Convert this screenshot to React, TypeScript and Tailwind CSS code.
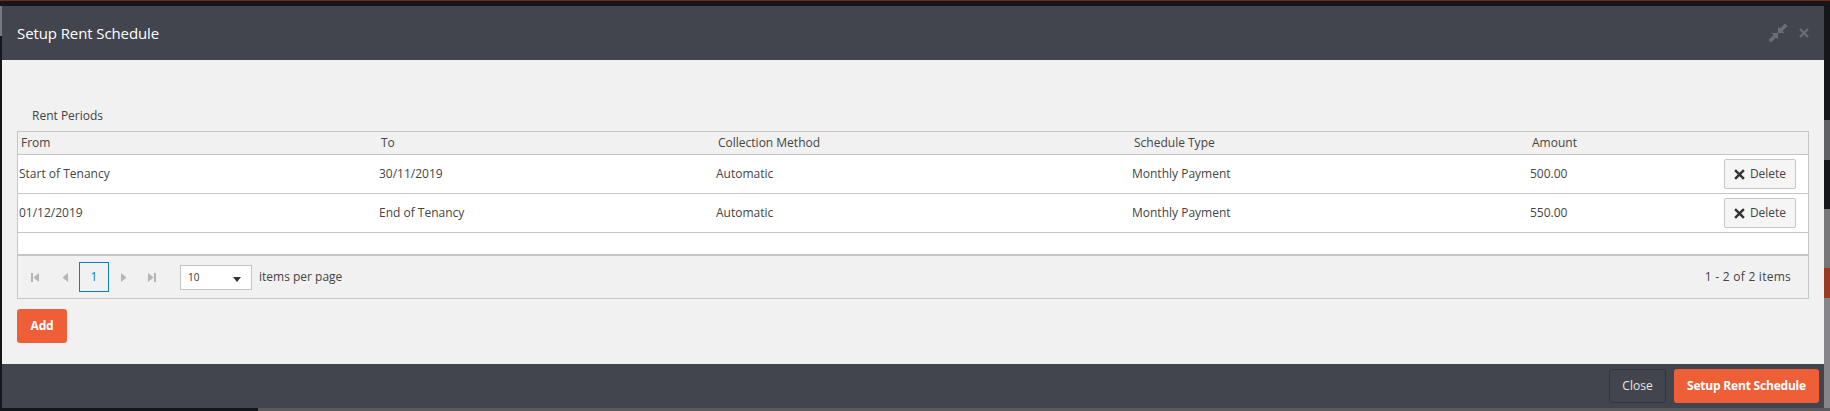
import React from 'react';

const rows = [
  { from: 'Start of Tenancy', to: '30/11/2019', amount: '500.00' },
  { from: '01/12/2019', to: 'End of Tenancy', amount: '550.00' },
];

// column widths of the grid, read off the reference
const cols = 'grid grid-cols-[360px_337px_416px_398px_193px_86px]';

const CompressIcon: React.FC = () => (
  <svg width="20" height="20" viewBox="0 0 20 20" fill="#6b6e76">
    <path d="M19.5 3 L14.5 8 L16.5 10 L10 10 L10 3.5 L12 5.5 L17 .5 Z" />
    <path d="M.5 17 L5.5 12 L3.5 10 L10 10 L10 16.5 L8 14.5 L3 19.5 Z" />
  </svg>
);

const CrossIcon: React.FC<{ size: number; className: string }> = ({ size, className }) => (
  <svg width={size} height={size} viewBox="0 0 10 10" fill="none" stroke="currentColor" strokeWidth="2.2" className={className}>
    <path d="M1 1 L9 9 M9 1 L1 9" />
  </svg>
);

const PagerArrow: React.FC<{ dir: 'left' | 'right'; bar?: boolean }> = ({ dir, bar }) => (
  <svg width="8" height="9" viewBox="0 0 8 9" fill="#b4b4b4">
    {dir === 'left' ? (
      <>
        {bar && <rect x="0" y="0" width="2" height="9" />}
        <path d="M8 0 V9 L2.5 4.5 Z" />
      </>
    ) : (
      <>
        <path d="M0 0 V9 L5.5 4.5 Z" />
        {bar && <rect x="6" y="0" width="2" height="9" />}
      </>
    )}
  </svg>
);

const DeleteButton: React.FC = () => (
  <button className="w-[72px] h-[30px] flex items-center justify-center gap-[5px] bg-[#f5f5f5] border border-[#c5c5c5] rounded-[2px] text-[12px] text-[#444]">
    <CrossIcon size={11} className="text-[#333]" />
    Delete
  </button>
);

export default function App() {
  return (
    <div className="h-[411px] w-[1830px] overflow-hidden flex flex-col bg-[#15161a] font-['Open_Sans',sans-serif] text-[12px] text-[#444]">
      <div className="h-px bg-[#7a2417]" />
      <div className="h-[5px]" />
      <div className="h-[402px] flex">
        <div className="w-[2px] flex flex-col">
          <div className="h-[30px] bg-[#77797d]" />
        </div>

        <div className="flex-1 flex flex-col">
          <div className="h-[54px] bg-[#42454e] flex items-center justify-between pl-[15px] pr-[15px]">
            <h1 className="text-[15px] tracking-[-0.1px] text-white">Setup Rent Schedule</h1>
            <div className="flex items-center gap-[11px]">
              <CompressIcon />
              <CrossIcon size={10} className="text-[#6b6e76]" />
            </div>
          </div>

          <div className="h-[304px] bg-[#f1f1f1] pl-[15px] pr-[15px]">
            <div className="h-[71px] pl-[15px] pt-[47px] leading-[18px]">Rent Periods</div>

            <div className="border border-[#c5c5c5] w-[1792px]">
              <div className={`${cols} h-[23px] items-center border-b border-[#c5c5c5]`}>
                <span className="pl-[3px]">From</span>
                <span className="pl-[3px]">To</span>
                <span className="pl-[3px]">Collection Method</span>
                <span className="pl-[3px]">Schedule Type</span>
                <span className="pl-[3px]">Amount</span>
              </div>

              {rows.map(r => (
                <div key={r.from} className={`${cols} h-[39px] items-center bg-white border-b border-[#c5c5c5]`}>
                  <span className="pl-px">{r.from}</span>
                  <span className="pl-px">{r.to}</span>
                  <span className="pl-px">Automatic</span>
                  <span className="pl-px">Monthly Payment</span>
                  <span className="pl-px">{r.amount}</span>
                  <span className="flex justify-end pr-[12px]">
                    <DeleteButton />
                  </span>
                </div>
              ))}

              <div className="h-[23px] bg-white border-b-2 border-[#c5c5c5]" />

              <div className="h-[42px] flex items-center justify-between pr-[17px]">
                <div className="flex items-center">
                  <div className="w-[61px] flex items-center justify-between pl-[13px] pr-[11px]">
                    <PagerArrow dir="left" bar />
                    <PagerArrow dir="left" />
                  </div>
                  <span className="w-[30px] h-[30px] flex items-center justify-center border border-[#0a7ebf] text-[#0a7ebf]">1</span>
                  <div className="w-[71px] flex items-center justify-between pl-[12px] pr-[24px]">
                    <PagerArrow dir="right" />
                    <PagerArrow dir="right" bar />
                  </div>
                  <div className="w-[72px] h-[25px] flex items-center justify-between bg-white border border-[#c5c5c5] pl-[7px] pr-[10px] text-[10px] text-[#333]">
                    10
                    <span className="mt-[5px] border-x-[4px] border-t-[5px] border-x-transparent border-t-[#333]" />
                  </div>
                  <span className="ml-[7px]">items per page</span>
                </div>
                <span className="tracking-[0.25px]">1 - 2 of 2 items</span>
              </div>
            </div>

            <button className="mt-[10px] w-[50px] h-[34px] rounded-[3px] bg-[#ee5f37] text-white font-bold tracking-[-0.2px]">Add</button>
          </div>

          <div className="h-[44px] bg-[#42454e] flex items-center justify-end gap-[8px] pr-[5px]">
            <button className="w-[57px] h-[34px] rounded-[3px] border border-[#33363d] text-[#e8e8e8]">Close</button>
            <button className="w-[145px] h-[34px] rounded-[3px] bg-[#ee5f37] text-white font-bold tracking-[-0.2px]">Setup Rent Schedule</button>
          </div>
        </div>

        <div className="w-[6px] flex flex-col">
          <div className="h-[114px]" />
          <div className="h-[40px] bg-[#5f6064]" />
          <div className="h-[49px]" />
          <div className="h-[59px] bg-[#77777a]" />
          <div className="h-[30px] bg-[#9a3a22]" />
          <div className="flex-1 bg-[#86868a]" />
        </div>
      </div>
      <div className="h-[3px] flex">
        <div className="w-[258px]" />
        <div className="flex-1 bg-[#5a5a5c]" />
      </div>
    </div>
  );
}
